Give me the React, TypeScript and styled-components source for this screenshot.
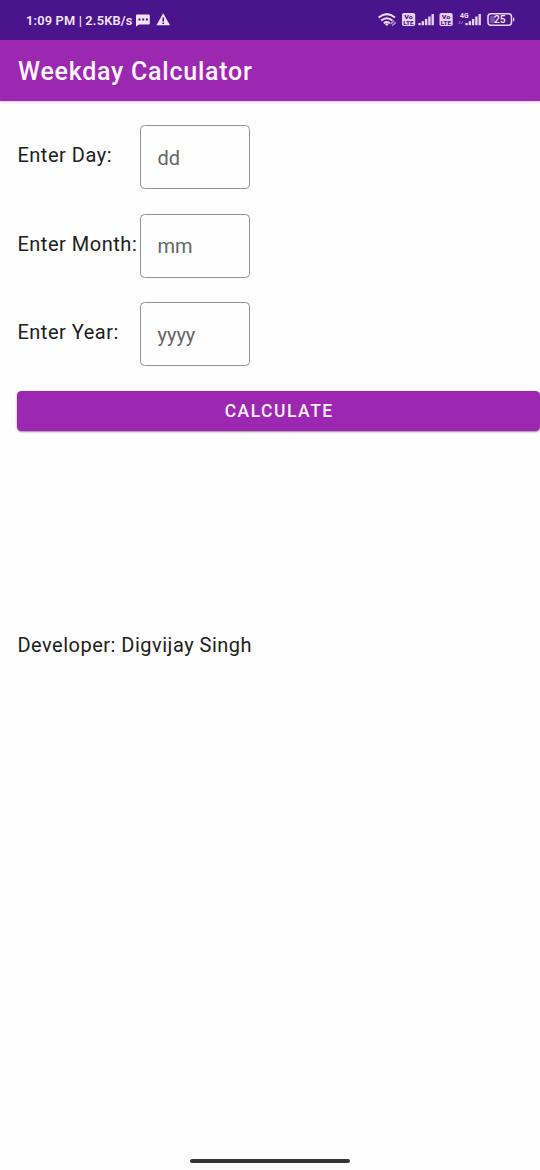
import React from "react";
import styled, { createGlobalStyle } from "styled-components";

const GlobalStyle = createGlobalStyle`
  * { box-sizing: border-box; }
  body { margin: 0; background: #fefefe; font-family: Roboto, sans-serif; color: #202020; }
`;

const Screen = styled.div`
  width: 540px;
  height: 1170px;
  display: flex;
  flex-direction: column;
  overflow: hidden;
`;

const StatusBar = styled.div`
  height: 39.5px;
  flex: none;
  display: flex;
  justify-content: space-between;
  background: #4a148c;
  color: #f3e4fb;
  padding: 0 24px 0 26px;
`;

const StatusLeft = styled.div`
  display: flex;
  align-items: flex-start;
`;

const StatusText = styled.span`
  font-size: 12.8px;
  font-weight: 600;
  letter-spacing: 0.18px;
  line-height: 41px;
  white-space: pre;
  width: 110px;
`;

const StatusIcons = styled.svg`
  display: block;
  flex: none;
`;

const AppBar = styled.header`
  height: 61.5px;
  flex: none;
  padding-left: 18px;
  background: #9c27b0;
  box-shadow: 0 1px 2px rgba(156, 39, 176, 0.3);
`;

const Title = styled.h1`
  margin: 0;
  color: #fdf5ff;
  font-size: 25px;
  font-weight: 500;
  line-height: 64px;
  letter-spacing: 0.75px;
`;

const Form = styled.main`
  flex: 1;
  display: flex;
  flex-direction: column;
  padding: 24.3px 0 0 17.4px;
`;

const Row = styled.div`
  display: flex;
  height: 64px;
  margin-bottom: 24.5px;
`;

const Label = styled.label`
  width: 122.6px;
  flex: none;
  font-size: 20px;
  line-height: 60px;
  letter-spacing: 0.52px;
  white-space: nowrap;
`;

const Field = styled.input`
  width: 110px;
  height: 64px;
  border: 1px solid #929292;
  border-radius: 4.5px;
  background: transparent;
  padding: 1.4px 16.5px 0;
  font: 400 20px Roboto, sans-serif;
  letter-spacing: 0;
  outline: none;
  &::placeholder { color: #666; opacity: 1; }
`;

const Calculate = styled.button`
  height: 40px;
  flex: none;
  border: 0;
  border-radius: 4.5px;
  background: #9c27b0;
  color: #fbefff;
  font: 500 17.5px Roboto, sans-serif;
  letter-spacing: 1.5px;
  box-shadow: 0 1px 2px rgba(60, 10, 70, 0.5);
  padding: 1px 0 0 1px;
  margin-top: -0.3px;
`;

const Developer = styled.p`
  margin: 201.5px 0 0;
  font-size: 20px;
  line-height: 26px;
  letter-spacing: 0.5px;
`;

const HomeHandle = styled.div`
  width: 160px;
  height: 4px;
  flex: none;
  border-radius: 2px;
  background: #343634;
  margin: 0 auto 7px;
`;

function NoticeIcons() {
  return (
    <StatusIcons width="36" height="40" viewBox="136 0 36 40" fill="#f3e4fb">
      <path d="M137 14.5h11.8a1 1 0 0 1 1 1v8a1 1 0 0 1-1 1H139l-3 2v-11a1 1 0 0 1 1-1Z" />
      <path d="M138.5 18.6h2v2h-2zm3.7 0h2v2h-2zm3.7 0h2v2h-2z" fill="#4a148c" />
      <path d="M163.2 13.3 170 25.3h-13.6Z" />
      <path d="M162.4 17.5h1.6v4h-1.6zm0 5h1.6V24h-1.6z" fill="#4a148c" />
    </StatusIcons>
  );
}

function VolteBadge({ x }: { x: number }) {
  return (
    <g transform={`translate(${x} 13)`}>
      <rect width="13.2" height="13" rx="1.8" fill="#e6d2f5" />
      <g fill="#4a148c" fontFamily="Roboto, sans-serif" fontWeight="800" textAnchor="middle">
        <text x="6.5" y="5.8" fontSize="5.4" textLength="8.5" lengthAdjust="spacingAndGlyphs">Vo</text>
        <text x="6.5" y="11.8" fontSize="5.4" textLength="10.5" lengthAdjust="spacingAndGlyphs">LTE</text>
      </g>
    </g>
  );
}

function SignalBars({ x }: { x: number }) {
  return (
    <g transform={`translate(${x} 0)`} fill="#e6d2f5">
      <rect x="0" y="23" width="2.4" height="2.2" />
      <rect x="3.3" y="21.2" width="2.4" height="4" />
      <rect x="6.6" y="19" width="2.4" height="6.2" />
      <rect x="9.9" y="16.5" width="2.4" height="8.7" />
      <rect x="13.2" y="14" width="2.4" height="11.2" />
    </g>
  );
}

function SystemIcons() {
  return (
    <StatusIcons width="138" height="40" viewBox="378 0 138 40">
      <g fill="none" stroke="#eddcf8" strokeWidth="2">
        <path d="M378.6 17.5q8.2-6.8 16.4 0" />
        <path d="M381.2 20.5q5.6-4.6 11.2 0" />
        <path d="M383.8 23.2q3-2.4 6 0" />
      </g>
      <path d="m384.8 24 2 2 2-2q-2-1.6-4 0Z" fill="#eddcf8" />
      <path d="m390.5 24 3.6-3.4m-2 5.2 3.6-3.4" stroke="#b795d5" strokeWidth="1.5" />
      <VolteBadge x={402} />
      <SignalBars x={418.3} />
      <VolteBadge x={439.5} />
      <text x="460" y="17.8" fill="#f3e4fb" fontFamily="Roboto, sans-serif" fontSize="6.8" fontWeight="700">4G</text>
      <path d="m459 24 1-3m1.5 3 1-3" stroke="#9671bd" />
      <SignalBars x={465.3} />
      <rect x="488" y="13.7" width="23.5" height="11.6" rx="3" fill="none" stroke="#e6d2f5" strokeWidth="1.6" />
      <rect x="490" y="15.8" width="5" height="7.4" rx="1" fill="#7a50a8" />
      <path d="M513 17.8h1.3v3.4H513z" fill="#e6d2f5" />
      <text x="499.8" y="23.4" fill="#f3e4fb" fontFamily="Roboto, sans-serif" fontSize="10.2" fontWeight="600" textAnchor="middle">25</text>
    </StatusIcons>
  );
}

const fields = [
  { id: "day", label: "Enter Day:", hint: "dd" },
  { id: "month", label: "Enter Month:", hint: "mm" },
  { id: "year", label: "Enter Year:", hint: "yyyy" },
];

export default function App() {
  return (
    <Screen>
      <GlobalStyle />
      <StatusBar>
        <StatusLeft>
          <StatusText>1:09 PM | 2.5KB/s</StatusText>
          <NoticeIcons />
        </StatusLeft>
        <SystemIcons />
      </StatusBar>
      <AppBar>
        <Title>Weekday Calculator</Title>
      </AppBar>
      <Form>
        {fields.map((f) => (
          <Row key={f.id}>
            <Label htmlFor={f.id}>{f.label}</Label>
            <Field id={f.id} placeholder={f.hint} />
          </Row>
        ))}
        <Calculate type="button">CALCULATE</Calculate>
        <Developer>Developer: Digvijay Singh</Developer>
      </Form>
      <HomeHandle />
    </Screen>
  );
}
